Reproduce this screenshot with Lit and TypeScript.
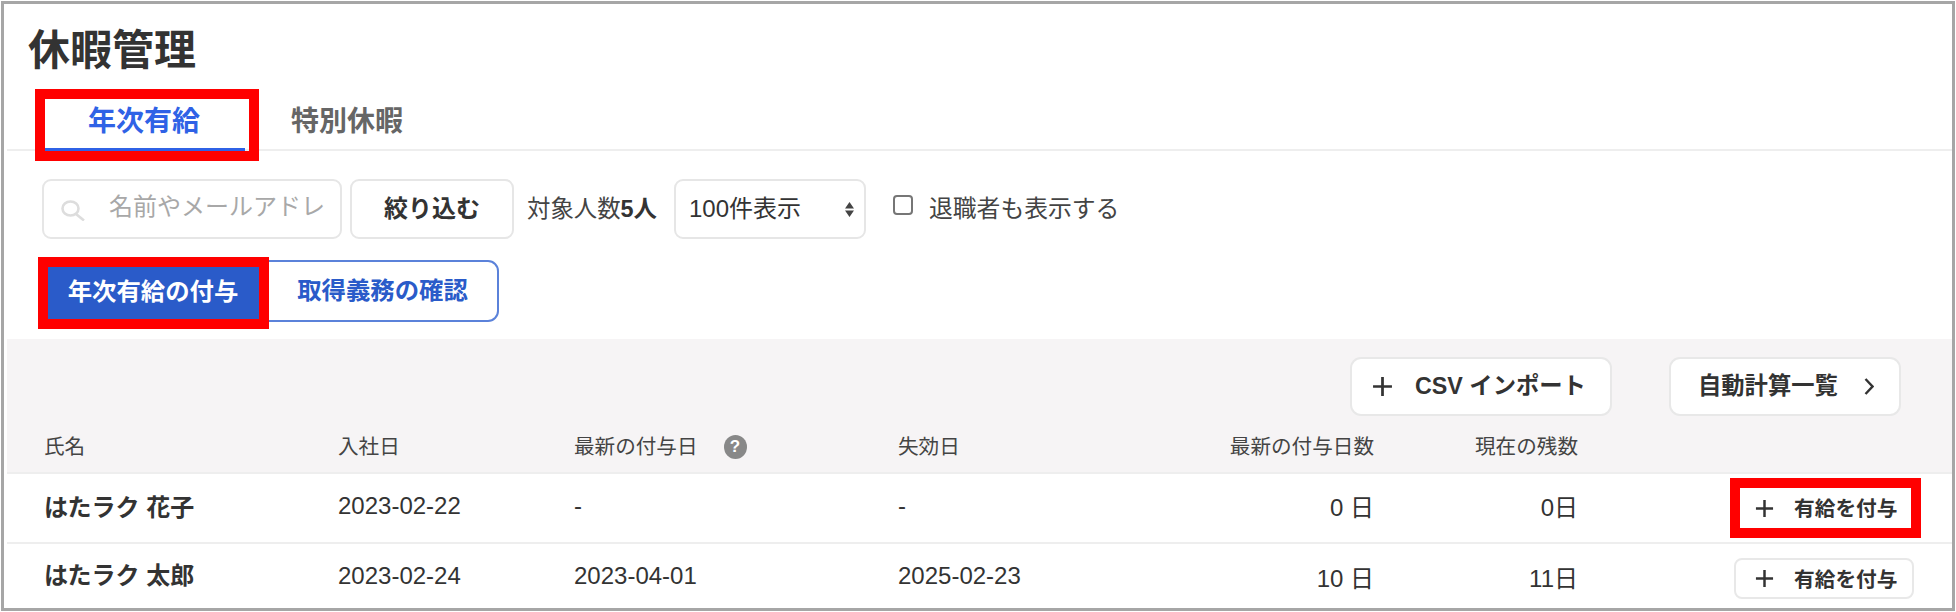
import { LitElement, html, css } from "lit";
import { customElement } from "lit/decorators.js";

const plus = (s: number) => html`<svg class="ico" width=${s} height=${s} viewBox="0 0 20 20" fill="none" stroke="#333" stroke-width="2.6"><path d="M10 1v18M1 10h18"/></svg>`;

const rows = [
  { name: "はたラク 花子", join: "2023-02-22", last: "-", exp: "-", days: "0 日", rest: "0日", mark: true },
  { name: "はたラク 太郎", join: "2023-02-24", last: "2023-04-01", exp: "2025-02-23", days: "10 日", rest: "11日", mark: false },
];

@customElement("app-root")
export class AppRoot extends LitElement {
  static styles = css`
    :host {
      display: block;
      box-sizing: border-box;
      width: 1954px;
      height: 610px;
      margin: 1px;
      border: 3px solid #a6a6a6;
      background: #fff;
      overflow: hidden;
      color: #333;
      font-family: "Liberation Sans", "Noto Sans CJK JP", sans-serif;
    }
    * { box-sizing: border-box; }
    .title {
      margin: 23px 0 0 24px;
      font-size: 42px;
      line-height: 48px;
      font-weight: 700;
      color: #333;
    }
    .tabs {
      display: flex;
      height: 52px;
      margin: 24px 0 0 3px;
      padding-left: 38px;
      border-bottom: 2px solid #eee;
    }
    .tab {
      position: relative;
      width: 200px;
      height: 52px;
      border-bottom: 3px solid #2f62e6;
      padding: 5px 2px 0 0;
      text-align: center;
      font-size: 28px;
      line-height: 36px;
      font-weight: 700;
      color: #2f62e6;
    }
    .tab::after {
      content: "";
      position: absolute;
      left: -10px;
      top: -10px;
      right: -14px;
      bottom: -13px;
      border: 10px solid #f00;
    }
    .tab2 {
      margin-left: 46px;
      padding-top: 5px;
      font-size: 28px;
      line-height: 36px;
      font-weight: 700;
      color: #666;
    }
    .filters {
      display: flex;
      align-items: center;
      height: 60px;
      margin: 28px 0 0 38px;
    }
    .search {
      position: relative;
      width: 300px;
      height: 60px;
    }
    .search svg {
      position: absolute;
      left: 19px;
      top: 21px;
    }
    .search input {
      width: 100%;
      height: 100%;
      border: 2px solid #e6e6e6;
      border-radius: 9px;
      padding: 0 15px 5px 65px;
      font: 24px "Liberation Sans", "Noto Sans CJK JP", sans-serif;
      outline: none;
      background: #fff;
    }
    .search input::placeholder { color: #a8a8a8; opacity: 1; }
    .narrow {
      width: 164px;
      height: 60px;
      margin-left: 8px;
      padding: 0 0 5px;
      border: 2px solid #e6e6e6;
      border-radius: 9px;
      background: #fff;
      font: 700 24px "Liberation Sans", "Noto Sans CJK JP", sans-serif;
      color: #333;
    }
    .count {
      width: 147px;
      margin-left: 13px;
      padding-bottom: 5px;
      font-size: 23.4px;
      color: #444;
    }
    .count b { color: #333; }
    .select {
      display: flex;
      align-items: center;
      justify-content: space-between;
      width: 192px;
      height: 60px;
      padding: 0 10px 0 13px;
      border: 2px solid #e6e6e6;
      border-radius: 9px;
      font-size: 24px;
      color: #333;
    }
    .select span { padding-bottom: 5px; }
    .check {
      appearance: none;
      width: 20px;
      height: 20px;
      margin: 0 16px 8px 27px;
      border: 2px solid #767676;
      border-radius: 4px;
      background: #fff;
    }
    .check-label {
      font-size: 23.8px;
      color: #444;
      padding-bottom: 5px;
    }
    .actions {
      display: flex;
      align-items: center;
      height: 62px;
      margin: 21px 0 0 44px;
      gap: 8px;
    }
    .grant {
      position: relative;
      width: 211px;
      height: 52px;
      margin-top: 4px;
      padding: 0 1px 7px 0;
      border: none;
      background: #2a5bc9;
      color: #fff;
      font: 700 24.4px "Liberation Sans", "Noto Sans CJK JP", sans-serif;
    }
    .grant::after {
      content: "";
      position: absolute;
      inset: -10px -10px -10px -10px;
      border: 10px solid #f00;
    }
    .duty {
      width: 232px;
      height: 62px;
      padding: 0 0 5px;
      border: 2px solid #5b82da;
      border-left-width: 1px;
      border-radius: 0 11px 11px 0;
      background: #fff;
      color: #2a5bc9;
      font: 700 24.4px "Liberation Sans", "Noto Sans CJK JP", sans-serif;
    }
    .band {
      margin: 17px 0 0 3px;
      background: #f6f4f5;
    }
    .tools {
      display: flex;
      justify-content: flex-end;
      gap: 57px;
      padding: 18px 51px 0 0;
    }
    .tool {
      display: flex;
      align-items: center;
      height: 59px;
      border: 2px solid #e8e8e8;
      border-radius: 11px;
      background: #fff;
      font-size: 23.3px;
      font-weight: 700;
      color: #333;
      white-space: nowrap;
    }
    .tool span { padding-bottom: 5px; }
    .csv { width: 262px; padding-left: 20px; gap: 22px; }
    .auto { width: 232px; padding-left: 27px; gap: 26px; }
    .grid {
      display: grid;
      grid-template-columns: 294px 236px 324px 200px 276px 204px 1fr;
      align-items: center;
      padding: 0 38px 0 37px;
    }
    .head {
      margin-top: 16px;
      height: 42px;
      padding-bottom: 10px;
      border-bottom: 2px solid #eee;
      font-size: 20.6px;
      line-height: 30px;
      color: #444;
    }
    .r { text-align: right; }
    .cell-help {
      display: flex;
      align-items: center;
      gap: 26px;
    }
    .help {
      display: flex;
      align-items: center;
      justify-content: center;
      width: 23px;
      height: 24px;
      border-radius: 50%;
      background: #888;
      color: #fff;
      font-size: 17px;
      font-weight: 700;
    }
    .row {
      margin-left: 3px;
      font-size: 24px;
      color: #333;
      border-bottom: 2px solid #eee;
      height: 70px;
    }
    .row:last-child { border-bottom: none; height: 64px; }
    .row:not(:last-child) > div:not(.act) { padding-bottom: 5px; }
    .row > .name { font-weight: 700; padding-bottom: 5px; }
    .act { display: flex; justify-content: flex-end; }
    .row:last-child .give { margin-top: 5px; }
    .give {
      position: relative;
      display: flex;
      align-items: center;
      gap: 20px;
      width: 180px;
      height: 41px;
      padding-left: 19px;
      border: 2px solid #e8e8e8;
      border-radius: 8px;
      background: #fff;
      font-size: 20.7px;
      font-weight: 700;
      color: #333;
      white-space: nowrap;
    }
    .give span { padding-bottom: 2px; }
    .give.mark { border-color: transparent; }
    .give.mark::after {
      content: "";
      position: absolute;
      inset: -12px -9px -11px -6px;
      border: 10px solid #f00;
    }
    .ico { flex: none; }
  `;

  render() {
    return html`
      <div class="title">休暇管理</div>
      <div class="tabs">
        <div class="tab">年次有給</div>
        <div class="tab2">特別休暇</div>
      </div>
      <div class="filters">
        <div class="search">
          <svg width="24" height="21" viewBox="0 0 24 21" fill="none" stroke="#ddd" stroke-width="2.6"><ellipse cx="9.5" cy="8.5" rx="8" ry="7"/><path d="M15 14l8 6.500"/></svg>
          <input placeholder="名前やメールアドレス" />
        </div>
        <button class="narrow">絞り込む</button>
        <div class="count">対象人数<b>5人</b></div>
        <div class="select">
          <span>100件表示</span>
          <svg width="9" height="15" viewBox="0 0 9 15" fill="#444"><path d="M4.500 0L9 6.400H0zM4.500 15L0 8.600h9z"/></svg>
        </div>
        <input class="check" type="checkbox" />
        <span class="check-label">退職者も表示する</span>
      </div>
      <div class="actions">
        <button class="grant">年次有給の付与</button>
        <button class="duty">取得義務の確認</button>
      </div>
      <div class="band">
        <div class="tools">
          <div class="tool csv">${plus(21)}<span>CSV インポート</span></div>
          <div class="tool auto"><span>自動計算一覧</span>
            <svg width="10" height="17" viewBox="0 0 10 17" fill="none" stroke="#333" stroke-width="2.4"><path d="M1.500 1l7 7.500-7 7.500"/></svg>
          </div>
        </div>
        <div class="grid head">
          <div>氏名</div>
          <div>入社日</div>
          <div class="cell-help"><span>最新の付与日</span><span class="help">?</span></div>
          <div>失効日</div>
          <div class="r">最新の付与日数</div>
          <div class="r">現在の残数</div>
          <div></div>
        </div>
      </div>
      ${rows.map(
        (r) => html`
          <div class="grid row">
            <div class="name">${r.name}</div>
            <div>${r.join}</div>
            <div>${r.last}</div>
            <div>${r.exp}</div>
            <div class="r">${r.days}</div>
            <div class="r">${r.rest}</div>
            <div class="act">
              <div class="give ${r.mark ? "mark" : ""}">${plus(19)}<span>有給を付与</span></div>
            </div>
          </div>
        `
      )}
    `;
  }
}
